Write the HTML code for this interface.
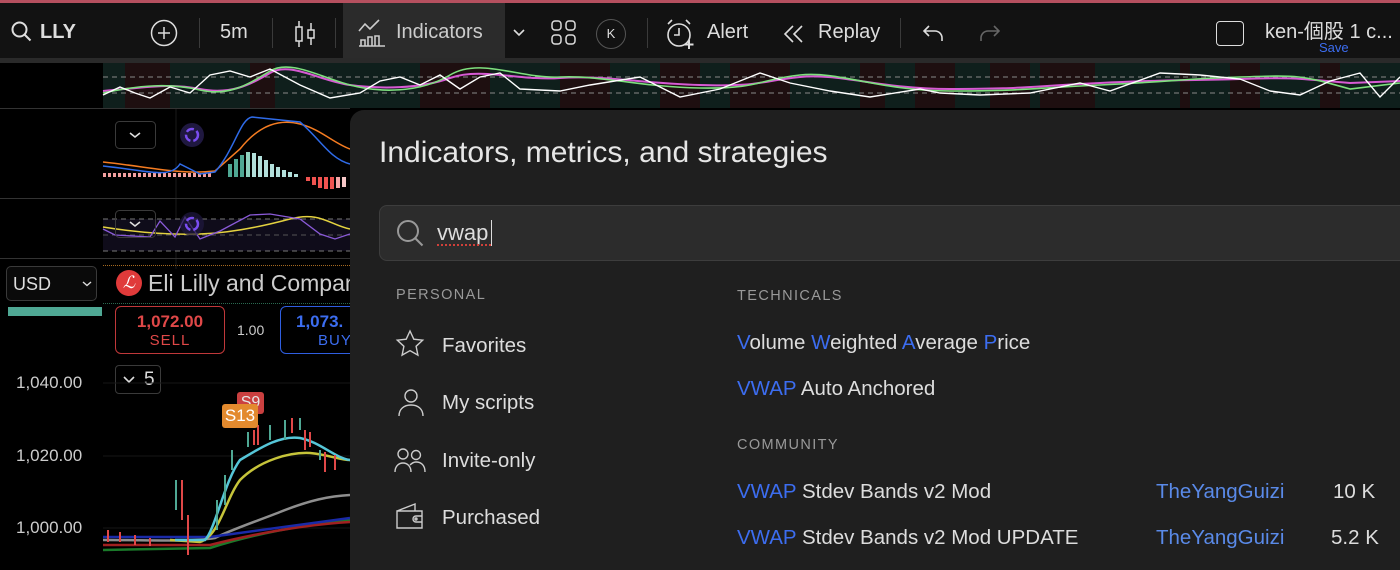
<!DOCTYPE html>
<html><head><meta charset="utf-8"><style>
*{margin:0;padding:0;box-sizing:border-box}
body{width:1400px;height:563px;overflow:hidden;background:#000;font-family:"Liberation Sans","Noto Sans CJK TC",sans-serif;color:#ddd;position:relative}
.abs{position:absolute}
.tb{left:0;top:0;width:1400px;height:58px;background:#121212;border-top:3px solid #b5505f}
.t{position:absolute;top:18px;font-size:20px;color:#ddd}
.sep{position:absolute;top:15px;width:1px;height:30px;background:#3a3a3a}
.panel{left:350px;top:110px;width:1060px;height:460px;background:#1f1f1f;border-top-left-radius:14px}
.blue{color:#3c6df0}
.sec{font-size:14.5px;letter-spacing:1.4px;color:#999}
.it{font-size:20.5px;color:#ddd}
</style></head><body>
<div class="abs tb">
 <svg class="abs" style="left:10px;top:17px" width="24" height="24" viewBox="0 0 24 24" fill="none" stroke="#ddd" stroke-width="2"><circle cx="9.5" cy="9.5" r="7"/><path d="M14.5 14.5l6 6"/></svg>
 <div class="t" style="left:40px;font-weight:bold">LLY</div>
 <svg class="abs" style="left:150px;top:16px" width="28" height="28" viewBox="0 0 28 28" fill="none" stroke="#ddd" stroke-width="1.5"><circle cx="14" cy="14" r="12.5"/><path d="M14 8v12M8 14h12"/></svg>
 <div class="sep" style="left:199px"></div>
 <div class="t" style="left:220px">5m</div>
 <div class="sep" style="left:272px"></div>
 <svg class="abs" style="left:292px;top:16px" width="26" height="30" viewBox="0 0 26 30" fill="none" stroke="#ddd" stroke-width="1.5"><path d="M7 2v26M19 4v22"/><rect x="4" y="8" width="6" height="14" fill="#121212"/><rect x="16" y="11" width="6" height="8" fill="#121212"/></svg>
 <div class="sep" style="left:335px"></div>
 <div class="abs" style="left:343px;top:0;width:162px;height:55px;background:#2b2b2b"></div>
 <svg class="abs" style="left:357px;top:15px" width="30" height="30" viewBox="0 0 30 30" fill="none" stroke="#ccc" stroke-width="1.6"><path d="M2 13l6-7 5 5 9-9"/><path d="M2 28h26M4 28v-6h4v6M11 28v-9h4v9M18 28v-10h4v10"/></svg>
 <div class="t" style="left:396px;color:#ccc">Indicators</div>
 <svg class="abs" style="left:512px;top:25px" width="14" height="10" viewBox="0 0 14 10" fill="none" stroke="#ddd" stroke-width="1.6"><path d="M2 2l5 5 5-5"/></svg>
 <svg class="abs" style="left:551px;top:17px" width="26" height="26" viewBox="0 0 26 26" fill="none" stroke="#ddd" stroke-width="1.5"><rect x="1" y="1" width="9" height="9" rx="3"/><rect x="15" y="1" width="9" height="9" rx="3"/><rect x="1" y="15" width="9" height="9" rx="3"/><rect x="15" y="15" width="9" height="9" rx="3"/></svg>
 <div class="abs" style="left:596px;top:16px;width:30px;height:30px;border:1px solid #555;border-radius:50%;font-size:13px;text-align:center;line-height:28px;color:#ddd">K</div>
 <div class="sep" style="left:647px"></div>
 <svg class="abs" style="left:665px;top:15px" width="32" height="32" viewBox="0 0 32 32" fill="none" stroke="#ddd" stroke-width="1.6"><circle cx="14" cy="17" r="11"/><path d="M14 10v7h-5M3 6l4-4M25 6l-4-4"/><path d="M24 22v9M19.5 26.5h9" stroke-width="2"/></svg>
 <div class="t" style="left:707px">Alert</div>
 <svg class="abs" style="left:782px;top:21px" width="24" height="20" viewBox="0 0 24 20" fill="none" stroke="#ddd" stroke-width="1.6"><path d="M11 2L3 10l8 8M20 2l-8 8 8 8"/></svg>
 <div class="t" style="left:818px">Replay</div>
 <div class="sep" style="left:900px"></div>
 <svg class="abs" style="left:922px;top:20px" width="24" height="20" viewBox="0 0 24 20" fill="none" stroke="#ddd" stroke-width="1.6"><path d="M7 3L2 8l5 5M2 8h11a7 7 0 0 1 7 7v3"/></svg>
 <svg class="abs" style="left:977px;top:20px" width="24" height="20" viewBox="0 0 24 20" fill="none" stroke="#666" stroke-width="1.6"><path d="M17 3l5 5-5 5M22 8H11a7 7 0 0 0-7 7v3"/></svg>
 <div class="abs" style="left:1216px;top:18px;width:28px;height:25px;border:1.6px solid #ddd;border-radius:4px"></div>
 <div class="t" style="left:1265px;top:12px">ken-個股 1 c...</div>
 <div class="abs" style="left:1319px;top:37px;font-size:13px;color:#3c6df0">Save</div>
</div>
<div class="abs" style="left:0;top:58px;width:1400px;height:5px;background:#2a2a2a"></div>
<svg class="abs" style="left:0;top:63px" width="1400" height="45">
 <rect x="103" width="1297" height="45" fill="#0f1f1c"/>
 <g fill="#1e0f10"><rect x="125" width="45" height="45"/><rect x="250" width="25" height="45"/><rect x="420" width="70" height="45"/><rect x="560" width="50" height="45"/><rect x="660" width="40" height="45"/><rect x="730" width="60" height="45"/><rect x="860" width="25" height="45"/><rect x="915" width="40" height="45"/><rect x="990" width="40" height="45"/><rect x="1040" width="55" height="45"/><rect x="1180" width="10" height="45"/><rect x="1230" width="30" height="45"/><rect x="1320" width="20" height="45"/></g>
 <line x1="103" y1="14" x2="1400" y2="14" stroke="#888" stroke-dasharray="5,4"/>
 <line x1="103" y1="30" x2="1400" y2="30" stroke="#888" stroke-dasharray="5,4"/>
 <path d="M103 28 C150 24 170 20 200 26 S250 22 270 10 S320 18 350 22 S420 26 450 15 S520 18 560 15 S640 20 700 22 S760 18 800 14 S880 26 950 26 S1020 24 1100 20 S1180 18 1240 16 S1300 16 1350 20 L1400 18" stroke="#d75ad3" stroke-width="2" fill="none"/>
 <path d="M103 30 C140 22 170 20 200 27 S250 20 270 8 S320 14 350 22 S420 30 450 12 S520 16 560 14 S640 24 700 25 S760 16 800 12 S880 28 950 28 S1020 26 1100 22 S1180 16 1240 14 S1300 12 1350 26 L1400 20" stroke="#7ee07e" stroke-width="1.6" fill="none"/>
 <path d="M103 32 L120 24 L135 30 L150 35 L170 24 L190 30 L210 12 L230 8 L250 14 L270 6 L300 22 L330 35 L360 30 L380 18 L400 14 L420 22 L440 12 L460 26 L480 14 L500 10 L520 26 L560 28 L590 22 L640 14 L680 34 L720 26 L760 10 L790 20 L830 28 L870 34 L920 26 L940 30 L980 32 L1030 30 L1080 20 L1110 28 L1160 10 L1200 12 L1240 16 L1270 28 L1300 32 L1330 18 L1360 10 L1380 34 L1400 14" stroke="#fff" stroke-width="1.4" fill="none"/>
</svg>
<div class="abs" style="left:0;top:108px;width:350px;height:1px;background:#333"></div>
<svg class="abs" style="left:0;top:109px" width="350" height="160">
 <line x1="176" y1="0" x2="176" y2="160" stroke="#1a1a1a"/>
 <g>
  <rect x="228" y="55" width="4" height="13" fill="#4fa894"/><rect x="234" y="50" width="4" height="18" fill="#4fa894"/><rect x="240" y="46" width="4" height="22" fill="#4fa894"/><rect x="246" y="43" width="4" height="25" fill="#8ed1bf"/><rect x="252" y="44" width="4" height="24" fill="#b2dfdb"/><rect x="258" y="47" width="4" height="21" fill="#b2dfdb"/><rect x="264" y="51" width="4" height="17" fill="#b2dfdb"/><rect x="270" y="55" width="4" height="13" fill="#b2dfdb"/><rect x="276" y="58" width="4" height="10" fill="#b2dfdb"/><rect x="282" y="61" width="4" height="7" fill="#b2dfdb"/><rect x="288" y="63" width="4" height="5" fill="#b2dfdb"/><rect x="294" y="65" width="4" height="3" fill="#b2dfdb"/>
  <rect x="306" y="68" width="4" height="4" fill="#f05350"/><rect x="312" y="68" width="4" height="8" fill="#f05350"/><rect x="318" y="68" width="4" height="11" fill="#f05350"/><rect x="324" y="68" width="4" height="12" fill="#f05350"/><rect x="330" y="68" width="4" height="12" fill="#f05350"/><rect x="336" y="68" width="4" height="11" fill="#f7a8a8"/><rect x="342" y="68" width="4" height="10" fill="#f7c8c8"/>
  <path d="M103 66h110" stroke="#f3a0a0" stroke-width="4" stroke-dasharray="3,2"/>
 </g>
 <path d="M103 53 C150 58 180 66 215 62 L240 40 C260 15 280 10 300 15 C320 20 335 35 350 40" stroke="#f57c21" stroke-width="1.5" fill="none"/>
 <path d="M103 57 C150 62 170 70 180 55 L200 65 L215 63 C235 40 240 10 252 8 L300 13 C320 30 330 50 350 55" stroke="#2f6be8" stroke-width="1.5" fill="none"/>
 <rect x="115.5" y="12.5" width="40" height="27" rx="4" fill="#000" stroke="#3a3a3a"/>
 <path d="M130 24l5 4 5-4" stroke="#ddd" stroke-width="1.6" fill="none"/>
 <circle cx="192" cy="26" r="12" fill="#1f1840"/>
 <circle cx="192" cy="26" r="6" stroke="#7a4df0" stroke-width="2.5" fill="none" stroke-dasharray="8,3"/>
</svg>
<div class="abs" style="left:0;top:198px;width:350px;height:1px;background:#333"></div>
<svg class="abs" style="left:0;top:199px" width="350" height="58">
 <rect x="103" y="20" width="247" height="32" fill="#0f0c1a"/>
 <line x1="103" y1="20" x2="350" y2="20" stroke="#777" stroke-dasharray="5,4"/>
 <line x1="103" y1="36" x2="350" y2="36" stroke="#555" stroke-dasharray="5,4"/>
 <line x1="103" y1="52" x2="350" y2="52" stroke="#777" stroke-dasharray="5,4"/>
 <path d="M103 28 C140 34 170 36 200 35 S260 28 290 20 S330 26 350 30" stroke="#e4d240" stroke-width="1.5" fill="none"/>
 <path d="M103 30 L115 36 L150 38 L160 22 L175 38 L185 18 L200 40 L220 32 L250 16 L270 15 L300 20 L320 35 L335 40 L350 35" stroke="#8a5ad8" stroke-width="1.3" fill="none"/>
 <rect x="115.5" y="11.5" width="40" height="27" rx="4" fill="none" stroke="#3a3a3a"/>
 <path d="M130 23l5 4 5-4" stroke="#ddd" stroke-width="1.6" fill="none"/>
 <circle cx="192" cy="25" r="12" fill="#1f1840" opacity=".7"/>
 <circle cx="192" cy="25" r="6" stroke="#7a4df0" stroke-width="2.5" fill="none" stroke-dasharray="8,3"/>
</svg>
<div class="abs" style="left:0;top:258px;width:350px;height:1px;background:#333"></div>
<div class="abs" style="left:103px;top:265px;width:247px;border-top:1px dotted #a66a20"></div>
<div class="abs" style="left:6px;top:266px;width:91px;height:35px;border:1px solid #3a3a3a;border-radius:5px;background:#0a0a0a;font-size:18px;padding:7px 0 0 6px;color:#ddd">USD</div>
<svg class="abs" style="left:82px;top:281px" width="10" height="6" viewBox="0 0 10 6" fill="none" stroke="#ddd" stroke-width="1.4"><path d="M1 1l4 3.5L9 1"/></svg>
<div class="abs" style="left:8px;top:307px;width:94px;height:9px;background:#4fa894"></div>
<div class="abs" style="left:116px;top:270px;width:26px;height:26px;border-radius:50%;background:#e03a3a;color:#fff;font-family:'Liberation Serif',serif;font-style:italic;font-size:17px;text-align:center;line-height:26px">ℒ</div>
<div class="abs" style="left:148px;top:270px;font-size:23px;color:#ccc;white-space:nowrap;width:202px;overflow:hidden">Eli Lilly and Company</div>
<div class="abs" style="left:103px;top:303px;width:247px;border-top:1px dotted #2a6a50"></div>
<div class="abs" style="left:115px;top:306px;width:110px;height:48px;border:1px solid #c0383a;border-radius:6px;text-align:center;color:#e04848"><div style="font-size:17px;font-weight:bold;margin-top:5px">1,072.00</div><div style="font-size:15px;letter-spacing:1px">SELL</div></div>
<div class="abs" style="left:237px;top:322px;font-size:14px;color:#ccc">1.00</div>
<div class="abs" style="left:280px;top:306px;width:80px;height:48px;border:1px solid #2f5ee0;border-radius:6px;color:#3c6df0;padding-left:15px"><div style="font-size:17px;font-weight:bold;margin-top:5px">1,073.</div><div style="font-size:15px;letter-spacing:1px;padding-left:22px">BUY</div></div>
<div class="abs" style="left:115px;top:365px;width:46px;height:29px;border:1px solid #3a3a3a;border-radius:4px;font-size:19px;color:#ddd;padding:3px 0 0 28px">5</div>
<svg class="abs" style="left:123px;top:376px" width="12" height="8" fill="none" stroke="#ddd" stroke-width="1.6"><path d="M1 1l5 5 5-5"/></svg>
<div class="abs" style="left:16px;top:373px;font-size:17px;color:#ccc">1,040.00</div>
<div class="abs" style="left:16px;top:446px;font-size:17px;color:#ccc">1,020.00</div>
<div class="abs" style="left:16px;top:518px;font-size:17px;color:#ccc">1,000.00</div>
<svg class="abs" style="left:0;top:380px" width="350" height="183">
 <line x1="103" y1="3" x2="350" y2="3" stroke="#161616"/><line x1="103" y1="76" x2="350" y2="76" stroke="#161616"/><line x1="103" y1="148" x2="350" y2="148" stroke="#161616"/>
 <path d="M103 160 C150 160 190 162 215 158 C230 150 260 140 280 132 C310 120 330 116 350 115" stroke="#8e8e8e" stroke-width="2.5" fill="none"/>
 <path d="M103 170 L210 168 C250 155 300 145 350 140" stroke="#1a7a2a" stroke-width="2.5" fill="none"/>
 <path d="M103 165 L210 165 C250 155 300 145 350 142" stroke="#a02020" stroke-width="2.5" fill="none"/>
 <path d="M103 157 L210 157 C250 152 300 145 350 138" stroke="#1a2aa8" stroke-width="2.5" fill="none"/>
 <path d="M170 160 L200 162 C220 155 225 120 240 100 C260 80 290 72 310 73 C330 75 340 80 350 80" stroke="#c6c43a" stroke-width="2.5" fill="none"/>
 <path d="M175 160 L205 160 C215 150 225 100 240 80 C260 68 280 55 300 58 C320 62 335 78 350 80" stroke="#56c6d8" stroke-width="2.5" fill="none"/>
 <g stroke="#4fa894" stroke-width="2"><path d="M176 100v30M217 120v30M225 95v30M232 70v20M248 52v15M270 45v15M285 40v20M300 38v12M320 70v10"/></g>
 <g stroke="#e04848" stroke-width="2"><path d="M182 100v40M188 135v40M254 50v15M258 45v20M292 38v15M305 50v20M310 52v15M325 72v20M335 75v15"/></g>
 <g stroke="#e04848" stroke-width="2"><path d="M108 150v12M120 152v10M135 155v10M150 158v8"/></g>
</svg>
<div class="abs" style="left:237px;top:392px;width:27px;height:22px;background:#e04848;border-radius:3px;color:#fff;font-size:16px;text-align:center;line-height:22px;opacity:.9">S9</div>
<div class="abs" style="left:222px;top:404px;width:36px;height:24px;background:#e38a2e;border-radius:3px;color:#fff;font-size:17px;text-align:center;line-height:24px">S13</div>
<div class="abs panel"></div>
<div class="abs" style="left:379px;top:136px;font-size:30px;color:#e6e6e6;white-space:nowrap">Indicators, metrics, and strategies</div>
<div class="abs" style="left:379px;top:205px;width:1040px;height:56px;background:#2c2c2c;border:1px solid #3d3d3d;border-radius:8px"></div>
<svg class="abs" style="left:396px;top:219px" width="30" height="30" viewBox="0 0 30 30" fill="none" stroke="#999" stroke-width="2"><circle cx="12" cy="12" r="10"/><path d="M19.5 19.5l7 7"/></svg>
<div class="abs" style="left:437px;top:220px;font-size:22px;color:#ddd">vwap</div>
<div class="abs" style="left:491px;top:220px;width:1px;height:26px;background:#ddd"></div>
<div class="abs" style="left:437px;top:244px;width:54px;border-top:2px dotted #d0403a"></div>
<div class="abs sec" style="left:396px;top:287px">PERSONAL</div>
<svg class="abs" style="left:395px;top:329px" width="30" height="30" viewBox="0 0 30 30" fill="none" stroke="#ccc" stroke-width="1.4"><path d="M15 2l3.8 8.2 8.9 1-6.6 6.1 1.8 8.8L15 21.7l-7.9 4.4 1.8-8.8-6.6-6.1 8.9-1z"/></svg>
<div class="abs it" style="left:442px;top:334px">Favorites</div>
<svg class="abs" style="left:397px;top:388px" width="28" height="30" viewBox="0 0 28 30" fill="none" stroke="#ccc" stroke-width="1.4"><circle cx="14" cy="8" r="6"/><path d="M2 28c0-7 5-11 12-11s12 4 12 11"/></svg>
<div class="abs it" style="left:442px;top:391px">My scripts</div>
<svg class="abs" style="left:394px;top:446px" width="32" height="28" viewBox="0 0 32 28" fill="none" stroke="#ccc" stroke-width="1.4"><circle cx="9" cy="8" r="5"/><circle cx="22" cy="9" r="4.5"/><path d="M1 26c0-6 4-9 8-9s8 3 8 9M16 19c2-2 4-3 6-3 5 0 9 3 9 10"/></svg>
<div class="abs it" style="left:442px;top:449px">Invite-only</div>
<svg class="abs" style="left:395px;top:502px" width="30" height="28" viewBox="0 0 30 28" fill="none" stroke="#ccc" stroke-width="1.4"><path d="M2 9h25v17H2zM2 9l18-7v7"/><path d="M27 14h-6a3 3 0 0 0 0 6h6"/><circle cx="21" cy="17" r="1"/></svg>
<div class="abs it" style="left:442px;top:506px">Purchased</div>
<div class="abs sec" style="left:737px;top:288px">TECHNICALS</div>
<div class="abs it" style="left:737px;top:331px"><span class="blue">V</span>olume <span class="blue">W</span>eighted <span class="blue">A</span>verage <span class="blue">P</span>rice</div>
<div class="abs it" style="left:737px;top:377px"><span class="blue">VWAP</span> Auto Anchored</div>
<div class="abs sec" style="left:737px;top:437px">COMMUNITY</div>
<div class="abs it" style="left:737px;top:480px"><span class="blue">VWAP</span> Stdev Bands v2 Mod</div>
<div class="abs it" style="left:737px;top:526px"><span class="blue">VWAP</span> Stdev Bands v2 Mod UPDATE</div>
<div class="abs it" style="left:1156px;top:480px;color:#5a8ae8">TheYangGuizi</div>
<div class="abs it" style="left:1156px;top:526px;color:#5a8ae8">TheYangGuizi</div>
<div class="abs it" style="left:1333px;top:480px">10 K</div>
<div class="abs it" style="left:1331px;top:526px">5.2 K</div>
</body></html>
